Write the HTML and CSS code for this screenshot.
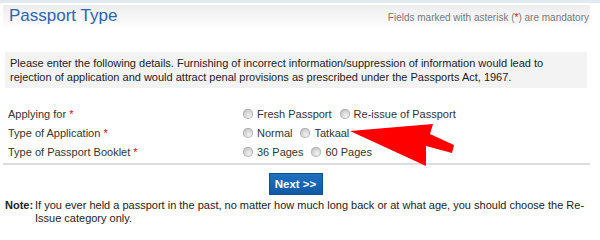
FILE: index.html
```html
<!DOCTYPE html>
<html>
<head>
<meta charset="utf-8">
<link rel="stylesheet" href="styles.css">
</head>
<body>
<div class="topbar"></div>
<div class="page">
  <div class="header">
    <h1 class="title">Passport Type</h1>
    <div class="mandatory">Fields marked with asterisk (<span class="req">*</span>) are mandatory</div>
  </div>
  <p class="intro">Please enter the following details. Furnishing of incorrect information/suppression of information would lead to rejection of application and would attract penal provisions as prescribed under the Passports Act, 1967.</p>
  <div class="form">
    <div class="label">Applying for <span class="req">*</span></div>
    <div class="options">
      <label class="opt"><span class="radio"></span>Fresh Passport</label>
      <label class="opt"><span class="radio"></span>Re-issue of Passport</label>
    </div>
    <div class="label">Type of Application <span class="req">*</span></div>
    <div class="options">
      <label class="opt"><span class="radio"></span>Normal</label>
      <label class="opt"><span class="radio"></span>Tatkaal</label>
    </div>
    <div class="label">Type of Passport Booklet <span class="req">*</span></div>
    <div class="options">
      <label class="opt"><span class="radio"></span>36 Pages</label>
      <label class="opt"><span class="radio"></span>60 Pages</label>
    </div>
  </div>
  <div class="divider"></div>
  <div class="actions"><button class="next">Next &gt;&gt;</button></div>
  <div class="note">
    <div class="note-label">Note:</div>
    <div class="note-text">If you ever held a passport in the past, no matter how much long back or at what age, you should choose the Re-Issue category only.</div>
  </div>
</div>
<svg class="arrow" width="600" height="238" viewBox="0 0 600 238">
  <polygon points="350,131 433,124 430,134 454,145 452,153 426,146 426,166" fill="#ff0000"/>
</svg>
</body>
</html>
```
FILE: styles.css
```css
html, body {
  margin: 0;
  padding: 0;
  background: #ffffff;
}
body {
  font-family: "Liberation Sans", Arial, sans-serif;
  color: #222;
  width: 600px;
  height: 238px;
  overflow: hidden;
  position: relative;
}
.topbar {
  height: 3px;
  background: #e3eaef;
}
.page {
  padding: 0 10px 0 3px;
}
.header {
  margin-top: 2px;
  height: 24px;
  display: flex;
  justify-content: space-between;
  align-items: flex-start;
  background: linear-gradient(to bottom, #ededed, #ffffff);
  padding: 0 1px 0 6px;
}
.title {
  margin: 0;
  font-size: 17px;
  font-weight: normal;
  color: #2a64b4;
  line-height: 22px;
}
.mandatory {
  font-size: 10px;
  color: #777;
  line-height: 13px;
  margin-top: 6px;
}
.req {
  color: #e00;
}
.intro {
  margin: 23px 3px 0 2px;
  padding: 4px 5px 4px 5px;
  background: #f3f3f3;
  font-size: 11px;
  line-height: 14px;
  color: #222;
}
.form {
  margin-top: 16px;
  display: grid;
  grid-template-columns: 235px auto;
  grid-auto-rows: 19px;
  align-items: center;
  font-size: 11px;
  padding-left: 5px;
}
.label {
  color: #333;
}
.options {
  display: flex;
  gap: 8px;
  color: #333;
}
.opt {
  display: flex;
  align-items: center;
}
.radio {
  width: 10px;
  height: 10px;
  border-radius: 50%;
  background: radial-gradient(circle at 60% 65%, #f2f2f2 0%, #cfcfcf 55%, #9e9e9e 100%);
  margin-right: 4px;
  box-shadow: inset 0 0 0 0.5px #a8a8a8;
}
.divider {
  margin-top: 2px;
  height: 2px;
  background: #dedede;
}
.actions {
  display: flex;
  justify-content: center;
  padding-top: 8px;
}
.next {
  font-family: "Liberation Sans", Arial, sans-serif;
  font-weight: bold;
  font-size: 11.5px;
  color: #fff;
  background: linear-gradient(to bottom, #1d70c0, #0f5aa5);
  border: 1px solid #0c4f92;
  height: 22px;
  width: 54px;
  padding: 0;
  margin-left: -2px;
}
.note {
  display: flex;
  margin-top: 4px;
  font-size: 11px;
  line-height: 13px;
  padding-left: 2px;
}
.note-label {
  font-weight: bold;
  width: 30px;
  flex: none;
}
.note-text {
  color: #222;
}
.arrow {
  position: absolute;
  left: 0;
  top: 0;
  pointer-events: none;
}
```
